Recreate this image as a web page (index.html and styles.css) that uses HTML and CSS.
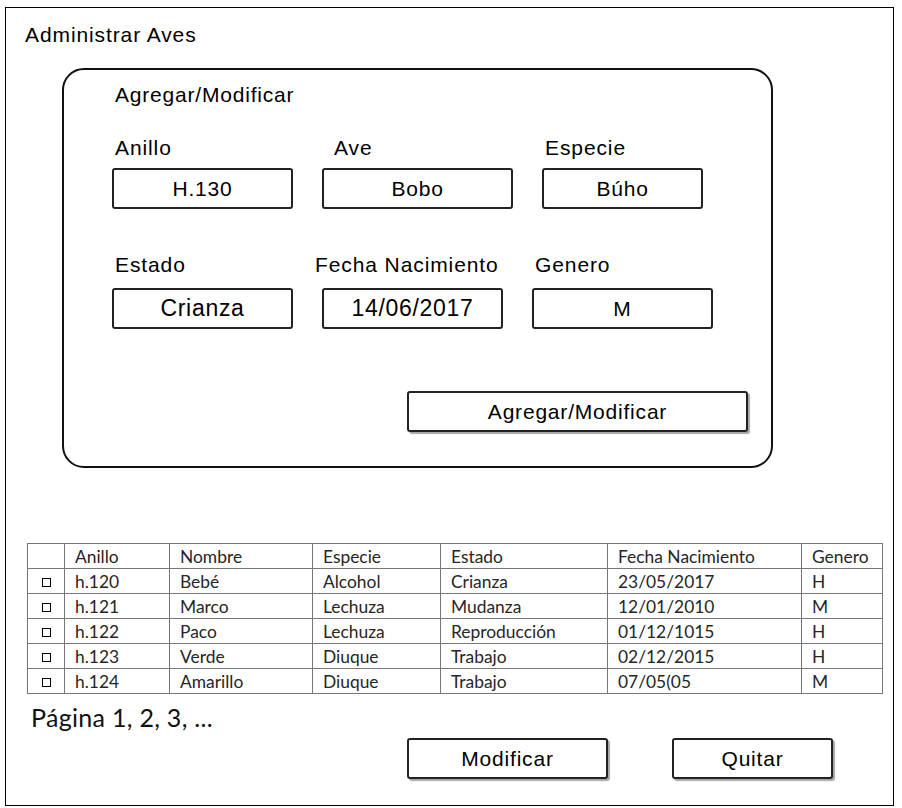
FILE: index.html
```html
<!DOCTYPE html>
<html lang="es">
<head>
<meta charset="utf-8">
<title>Administrar Aves</title>
<link rel="stylesheet" href="styles.css">
</head>
<body>
<div class="frame">
  <div class="page-title">Administrar Aves</div>

  <div class="panel">
    <div class="panel-title">Agregar/Modificar</div>

    <div class="fields fields-1">
      <div class="field w181">
        <div class="label ind3">Anillo</div>
        <div class="box">H.130</div>
      </div>
      <div class="field w191">
        <div class="label ind12">Ave</div>
        <div class="box">Bobo</div>
      </div>
      <div class="field w161">
        <div class="label ind3">Especie</div>
        <div class="box">Búho</div>
      </div>
    </div>

    <div class="fields fields-2">
      <div class="field w181">
        <div class="label ind3">Estado</div>
        <div class="box big">Crianza</div>
      </div>
      <div class="field w181">
        <div class="label indm7">Fecha Nacimiento</div>
        <div class="box big">14/06/2017</div>
      </div>
      <div class="field w181">
        <div class="label ind3">Genero</div>
        <div class="box">M</div>
      </div>
    </div>

    <div class="panel-actions">
      <div class="btn btn-wide">Agregar/Modificar</div>
    </div>
  </div>

  <table class="grid">
    <colgroup>
      <col class="c0"><col class="c1"><col class="c2"><col class="c3"><col class="c4"><col class="c5"><col class="c6">
    </colgroup>
    <tr class="head"><td></td><td>Anillo</td><td>Nombre</td><td>Especie</td><td>Estado</td><td>Fecha Nacimiento</td><td>Genero</td></tr>
    <tr><td class="chk"><span class="sq"></span></td><td>h.120</td><td>Bebé</td><td>Alcohol</td><td>Crianza</td><td>23/05/2017</td><td>H</td></tr>
    <tr><td class="chk"><span class="sq"></span></td><td>h.121</td><td>Marco</td><td>Lechuza</td><td>Mudanza</td><td>12/01/2010</td><td>M</td></tr>
    <tr><td class="chk"><span class="sq"></span></td><td>h.122</td><td>Paco</td><td>Lechuza</td><td>Reproducción</td><td>01/12/1015</td><td>H</td></tr>
    <tr><td class="chk"><span class="sq"></span></td><td>h.123</td><td>Verde</td><td>Diuque</td><td>Trabajo</td><td>02/12/2015</td><td>H</td></tr>
    <tr><td class="chk"><span class="sq"></span></td><td>h.124</td><td>Amarillo</td><td>Diuque</td><td>Trabajo</td><td>07/05(05</td><td>M</td></tr>
  </table>

  <div class="pager">Página 1, 2, 3, ...</div>

  <div class="actions">
    <div class="btn btn-mod">Modificar</div>
    <div class="btn btn-quit">Quitar</div>
  </div>
</div>
</body>
</html>
```

FILE: styles.css
```css
* { box-sizing: border-box; }

html, body {
  margin: 0;
  padding: 0;
  background: #ffffff;
}

body {
  font-family: "Liberation Sans", Arial, sans-serif;
  color: #000;
}

.frame {
  margin: 7px 0 0 5px;
  width: 889px;
  height: 799px;
  border: 1px solid #000;
  padding-top: 15px;
}

.page-title {
  margin-left: 19px;
  font-size: 21px;
  line-height: 24px;
  letter-spacing: 0.9px;
}

.panel {
  margin: 21px 0 0 56px;
  width: 711px;
  height: 400px;
  border: 2px solid #111;
  border-radius: 22px;
  padding: 13px 0 0 48px;
}

.panel-title {
  margin-left: 3px;
  font-size: 21px;
  line-height: 24px;
  letter-spacing: 0.8px;
}

.fields {
  display: flex;
  gap: 29px;
}

.fields-1 { margin-top: 29px; }
.fields-1 .label { margin-bottom: 8px; }

.fields-2 { margin-top: 44px; }
.fields-2 .label { margin-bottom: 11px; }

.field { display: flex; flex-direction: column; }
.w181 { width: 181px; }
.w191 { width: 191px; }
.w161 { width: 161px; }

.label {
  font-size: 21px;
  line-height: 24px;
  letter-spacing: 0.9px;
  white-space: nowrap;
}
.ind3 { padding-left: 3px; }
.ind12 { padding-left: 12px; }
.indm7 { margin-left: -7px; }

.box {
  height: 41px;
  border: 2px solid #222;
  border-radius: 3px;
  display: flex;
  align-items: center;
  justify-content: center;
  font-size: 21px;
  letter-spacing: 0.8px;
}
.box.big { font-size: 23px; letter-spacing: 0.7px; }

.panel-actions {
  margin-top: 62px;
  padding-left: 295px;
}

.btn {
  height: 41px;
  border: 2px solid #222;
  border-radius: 3px;
  display: flex;
  align-items: center;
  justify-content: center;
  font-size: 21px;
  letter-spacing: 0.8px;
  box-shadow: 2px 2px 1px rgba(0, 0, 0, 0.35);
  background: #fff;
}
.btn-wide { width: 341px; }

.grid {
  margin: 75px 0 0 21px;
  border-collapse: collapse;
  table-layout: fixed;
  width: 855px;
  font-family: Lato, "Open Sans", sans-serif;
  font-size: 17.4px;
  color: #262626;
}
.grid col.c0 { width: 37px; }
.grid col.c1 { width: 105px; }
.grid col.c2 { width: 143px; }
.grid col.c3 { width: 128px; }
.grid col.c4 { width: 167px; }
.grid col.c5 { width: 194px; }
.grid col.c6 { width: 81px; }

.grid td {
  border: 1px solid #777;
  height: 25px;
  padding: 2px 0 0 10px;
  line-height: 22px;
  white-space: nowrap;
  overflow: hidden;
}
.grid tr.head td { height: 24px; }
.grid td.chk { padding: 0; text-align: center; }

.sq {
  display: inline-block;
  width: 9px;
  height: 9px;
  border: 1px solid #000;
  vertical-align: middle;
}

.pager {
  margin: 8px 0 0 25px;
  font-family: Lato, "Open Sans", sans-serif;
  font-size: 25px;
  letter-spacing: 0.3px;
  line-height: 30px;
  color: #111;
}

.actions {
  margin-top: 6px;
  display: flex;
  padding-left: 401px;
  gap: 64px;
}
.btn-mod { width: 201px; }
.btn-quit { width: 161px; }
```
